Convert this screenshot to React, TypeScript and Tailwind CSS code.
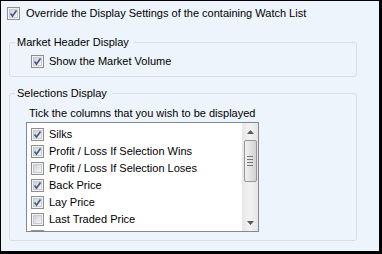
import type { ReactNode } from "react";

// Watch list display settings panel (WinForms look).

const COLUMNS = [
  { label: "Silks", checked: true },
  { label: "Profit / Loss If Selection Wins", checked: true },
  { label: "Profit / Loss If Selection Loses", checked: false },
  { label: "Back Price", checked: true },
  { label: "Lay Price", checked: true },
  { label: "Last Traded Price", checked: false },
  { label: "Selection Volume", checked: false },
];

function CheckBox({ checked }: { checked: boolean }) {
  return (
    <span className="relative flex h-[13px] w-[13px] shrink-0 border border-[#8e8f8f] bg-[#f4f4f4] p-px">
      <span className="block h-full w-full border border-[#c8ccd2] bg-gradient-to-br from-[#cdd1d7] to-[#f7f7f7]" />
      {checked && (
        <svg className="absolute left-[1px] top-[1px]" width="9" height="9" viewBox="0 0 9 9">
          <path d="M1.5 4.5 L3.5 7 L7.5 1.5" fill="none" stroke="#4a5b8c" strokeWidth="1.7" />
        </svg>
      )}
    </span>
  );
}

function Group({ title, className, children }: { title: string; className: string; children: ReactNode }) {
  return (
    <fieldset className={`rounded-[3px] border border-[#d5dfe5] ${className}`}>
      <legend className="ml-[5px] pl-[2px] pr-[5px] leading-[13px]">{title}</legend>
      {children}
    </fieldset>
  );
}

function ScrollBar() {
  return (
    <div className="flex w-[16px] flex-col items-center bg-gradient-to-r from-[#e6e6e6] via-[#f2f2f2] to-[#e6e6e6]">
      <div className="flex h-[17px] items-center justify-center">
        <svg width="7" height="4" viewBox="0 0 7 4">
          <path d="M0 4 L3.5 0 L7 4 Z" fill="#5a5a5a" />
        </svg>
      </div>
      <div className="flex h-[42px] w-[13px] flex-col items-center justify-center gap-[2px] rounded-[2px] border border-[#979797] bg-gradient-to-r from-[#f0f0f0] via-[#e2e2e2] to-[#d2d2d2]">
        <span className="h-px w-[6px] bg-[#777]" />
        <span className="h-px w-[6px] bg-[#777]" />
        <span className="h-px w-[6px] bg-[#777]" />
        <span className="h-px w-[6px] bg-[#777]" />
      </div>
      <div className="flex-1" />
      <div className="flex h-[17px] items-center justify-center">
        <svg width="7" height="4" viewBox="0 0 7 4">
          <path d="M0 0 L3.5 4 L7 0 Z" fill="#5a5a5a" />
        </svg>
      </div>
    </div>
  );
}

export default function App() {
  return (
    <div
      className="h-[254px] w-[382px] overflow-hidden border-b-[3px] border-l border-r-[3px] border-t border-black bg-[#eef4fb] text-[11px] text-black"
      style={{ fontFamily: '"Liberation Sans", Arial, sans-serif' }}
    >
      <div className="ml-[6px] mt-[6px] flex items-center gap-[6px]">
        <CheckBox checked />
        <span className="leading-[13px]">Override the Display Settings of the containing Watch List</span>
      </div>

      <Group title="Market Header Display" className="ml-[8px] mt-[16px] h-[41px] w-[348px]">
        <div className="ml-[21px] mt-[6px] flex items-center gap-[5px]">
          <CheckBox checked />
          <span className="leading-[13px]">Show the Market Volume</span>
        </div>
      </Group>

      <Group title="Selections Display" className="ml-[8px] mt-[10px] h-[154px] w-[348px]">
        <p className="ml-[19px] mt-[7px] leading-[13px]">Tick the columns that you wish to be displayed</p>
        <div className="ml-[16px] mt-[2px] flex h-[110px] w-[233px] border border-[#828790] bg-white">
          <ul className="flex-1 overflow-hidden pl-[4px] pt-[5px]">
            {COLUMNS.map((c) => (
              <li key={c.label} className="flex h-[17px] items-start gap-[5px] whitespace-nowrap">
                <CheckBox checked={c.checked} />
                <span className="leading-[12px]">{c.label}</span>
              </li>
            ))}
          </ul>
          <ScrollBar />
        </div>
      </Group>
    </div>
  );
}
